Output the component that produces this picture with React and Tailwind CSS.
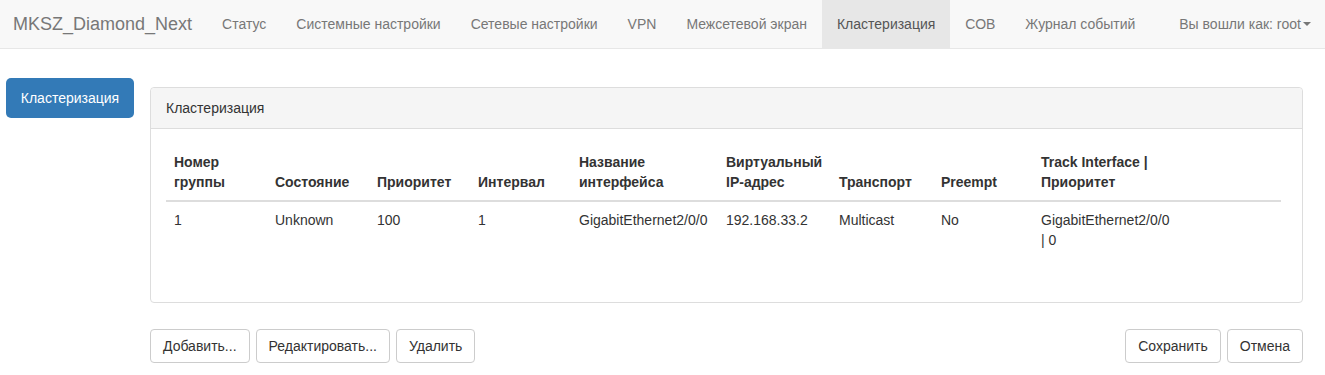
import React from "react";

const navItems = [
  "Статус",
  "Системные настройки",
  "Сетевые настройки",
  "VPN",
  "Межсетевой экран",
  "Кластеризация",
  "СОВ",
  "Журнал событий",
];

const cols = [101, 102, 101, 101, 147, 113, 102, 100, null];

function Btn({ children }) {
  return (
    <button className="h-[34px] px-[12px] border border-[#ccc] rounded-[4px] bg-white text-[14px] text-[#333] leading-[20px]">
      {children}
    </button>
  );
}

export default function App() {
  return (
    <div
      className="min-h-[375px] bg-white text-[14px] text-[#333]"
      style={{ fontFamily: '"Liberation Sans", Arial, sans-serif' }}
    >
      <nav className="h-[49px] bg-[#f8f8f8] border-b border-[#e7e7e7] flex items-stretch">
        <div className="pl-[13px] pr-[15px] flex items-center text-[18px] text-[#777]">
          MKSZ_Diamond_Next
        </div>
        <ul className="flex items-stretch">
          {navItems.map((n) => (
            <li
              key={n}
              className={
                "px-[15px] flex items-center " +
                (n === "Кластеризация"
                  ? "bg-[#e7e7e7] text-[#555]"
                  : "text-[#777]")
              }
            >
              {n}
            </li>
          ))}
        </ul>
        <div className="ml-auto pr-[14px] flex items-center text-[#777]">
          Вы вошли как: root
          <span className="ml-[2px] inline-block w-0 h-0 border-t-[4px] border-t-[#777] border-x-[4px] border-x-transparent"></span>
        </div>
      </nav>

      <div className="flex pl-[6px] pr-[22px] pt-[29px]">
        <div className="w-[144px] shrink-0">
          <button className="w-[128px] h-[40px] rounded-[5px] bg-[#337ab7] text-white text-[14px]">
            Кластеризация
          </button>
        </div>
        <div className="flex-1 pt-[9px]">
          <div className="border border-[#ddd] rounded-[4px]">
            <div className="h-[41px] px-[15px] flex items-center bg-[#f5f5f5] border-b border-[#ddd] rounded-t-[4px]">
              Кластеризация
            </div>
            <div className="pl-[15px] pr-[21px] pt-[15px] pb-[44px]">
              <table className="w-full table-fixed border-collapse leading-[20px]">
                <colgroup>
                  {cols.map((w, i) => (
                    <col key={i} style={w ? { width: w } : undefined} />
                  ))}
                </colgroup>
                <thead>
                  <tr className="border-b-2 border-[#ddd]">
                    {[
                      ["Номер", "группы"],
                      ["Состояние"],
                      ["Приоритет"],
                      ["Интервал"],
                      ["Название", "интерфейса"],
                      ["Виртуальный", "IP-адрес"],
                      ["Транспорт"],
                      ["Preempt"],
                      ["Track Interface |", "Приоритет"],
                    ].map((h, i) => (
                      <th
                        key={i}
                        className="p-[8px] text-left align-bottom font-bold whitespace-nowrap"
                      >
                        {h.map((l, j) => (
                          <div key={j}>{l}</div>
                        ))}
                      </th>
                    ))}
                  </tr>
                </thead>
                <tbody>
                  <tr>
                    {[
                      "1",
                      "Unknown",
                      "100",
                      "1",
                      "GigabitEthernet2/0/0",
                      "192.168.33.2",
                      "Multicast",
                      "No",
                    ].map((c, i) => (
                      <td key={i} className="p-[8px] align-top whitespace-nowrap">
                        {c}
                      </td>
                    ))}
                    <td className="p-[8px] align-top whitespace-nowrap">
                      GigabitEthernet2/0/0
                      <br />| 0
                    </td>
                  </tr>
                </tbody>
              </table>
            </div>
          </div>

          <div className="mt-[26px] flex">
            <div className="flex gap-[6px]">
              <Btn>Добавить...</Btn>
              <Btn>Редактировать...</Btn>
              <Btn>Удалить</Btn>
            </div>
            <div className="ml-auto flex gap-[6px]">
              <Btn>Сохранить</Btn>
              <Btn>Отмена</Btn>
            </div>
          </div>
        </div>
      </div>
    </div>
  );
}
